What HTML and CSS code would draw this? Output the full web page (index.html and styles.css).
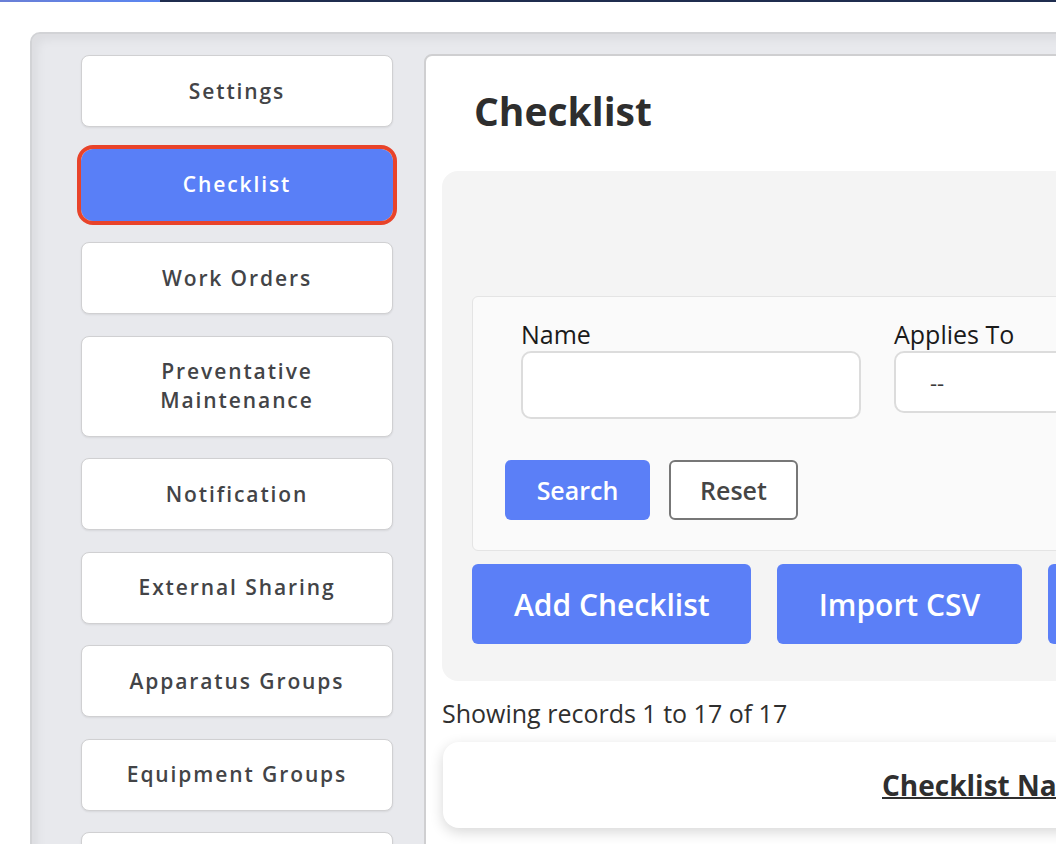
FILE: index.html
```html
<!DOCTYPE html>
<html lang="en">
<head>
  <meta charset="UTF-8">
  <title>Checklist</title>
  <meta name="viewport" content="width=device-width, initial-scale=1.0">
  <link rel="stylesheet" href="styles.css">
</head>
<body>
  <div class="progress">
    <div class="progress-done"></div>
  </div>

  <div class="shell">
    <aside class="side-nav">
      <a href="#" class="nav-btn">Settings</a>
      <a href="#" class="nav-btn active">Checklist</a>
      <a href="#" class="nav-btn">Work Orders</a>
      <a href="#" class="nav-btn">Preventative Maintenance</a>
      <a href="#" class="nav-btn">Notification</a>
      <a href="#" class="nav-btn">External Sharing</a>
      <a href="#" class="nav-btn">Apparatus Groups</a>
      <a href="#" class="nav-btn">Equipment Groups</a>
      <a href="#" class="nav-btn">Users</a>
    </aside>

    <main class="main-card">
      <h1 class="page-title">Checklist</h1>

      <section class="tools">
        <form class="filters">
          <div class="filter-row">
            <label class="field">
              <span>Name</span>
              <input type="text" class="name-input">
            </label>
            <label class="field">
              <span>Applies To</span>
              <select class="applies-select">
                <option>--</option>
              </select>
            </label>
          </div>
          <div class="filter-actions">
            <button type="button" class="btn-search">Search</button>
            <button type="reset" class="btn-reset">Reset</button>
          </div>
        </form>

        <div class="big-actions">
          <button class="btn-big">Add Checklist</button>
          <button class="btn-big">Import CSV</button>
          <button class="btn-big">Export CSV</button>
        </div>
      </section>

      <p class="record-count">Showing records 1 to 17 of 17</p>

      <div class="table-head">
        <a href="#" class="col-title">Checklist Name</a>
      </div>
    </main>
  </div>
</body>
</html>
```

FILE: styles.css
```css
body {
  margin: 0;
  font-family: 'Open Sans', sans-serif;
  background: #ffffff;
  color: #333333;
  overflow: hidden;
  width: 1056px;
  height: 844px;
}
.progress {
  height: 2px;
  background: #1f2d4f;
  display: flex;
}
.progress-done {
  width: 160px;
  background: linear-gradient(90deg, #6a7fd6, #5a86f1);
}
.shell {
  margin: 30px 0 0 30px;
  width: 1400px;
  height: 1000px;
  box-sizing: border-box;
  background: #e8e9ed;
  border: 2px solid #d2d3d6;
  border-radius: 10px;
  box-shadow: inset 6px 6px 10px rgba(0,0,0,0.05);
  display: flex;
  align-items: flex-start;
  padding: 20px 0 0 49px;
}
.side-nav {
  width: 312px;
  flex-shrink: 0;
  display: flex;
  flex-direction: column;
  gap: 21.5px;
  padding-top: 1px;
}
.nav-btn {
  display: block;
  box-sizing: border-box;
  background: #ffffff;
  border: 1px solid #d0d0d2;
  border-radius: 8px;
  box-shadow: 0 1px 2px rgba(0,0,0,0.08);
  padding: 20.5px 16px;
  line-height: 29px;
  text-align: center;
  text-decoration: none;
  font-size: 21px;
  font-weight: 600;
  letter-spacing: 1.9px;
  color: #434447;
}
.nav-btn.active {
  background: #597ff7;
  color: #ffffff;
  border-color: #597ff7;
  outline: 4px solid #e8432a;
  border-radius: 12px;
}
.main-card {
  margin: 0 0 0 31px;
  width: 900px;
  height: 900px;
  background: #ffffff;
  border: 2px solid #cfcfd1;
  border-radius: 8px;
  padding: 0 16px;
}
.page-title {
  margin: 28px 0 0 32px;
  font-size: 39px;
  font-weight: 700;
  line-height: 54px;
  color: #2e2e2e;
}
.tools {
  margin-top: 33px;
  background: #f4f4f4;
  border-radius: 16px;
  padding: 125px 30px 37px;
}
.filters {
  background: #fafafa;
  border: 1px solid #e4e4e4;
  border-radius: 6px;
  padding: 20px 32px 30px;
}
.filter-row {
  display: flex;
  gap: 33px;
  padding-left: 16px;
}
.field {
  display: flex;
  flex-direction: column;
  font-size: 25px;
  line-height: 34px;
  color: #1a1a1a;
}
.name-input {
  width: 340px;
  height: 68px;
  box-sizing: border-box;
  margin-top: 0;
  border: 2px solid #dcdcdc;
  border-radius: 10px;
  background: #ffffff;
}
.applies-select {
  width: 300px;
  height: 62px;
  box-sizing: border-box;
  border: 2px solid #dcdcdc;
  border-radius: 10px;
  background: #ffffff;
  padding: 0 20px 0 34px;
  font-family: 'Open Sans', sans-serif;
  font-size: 22px;
  color: #3a3a3a;
  appearance: none;
}
.filter-actions {
  display: flex;
  gap: 19px;
  margin-top: 41px;
}
.btn-search,
.btn-reset {
  height: 60px;
  border-radius: 6px;
  font-family: 'Open Sans', sans-serif;
  font-size: 25px;
  font-weight: 600;
  cursor: pointer;
}
.btn-search {
  width: 145px;
  background: #5b7ff7;
  border: none;
  color: #ffffff;
}
.btn-reset {
  width: 129px;
  background: #ffffff;
  border: 2px solid #777777;
  color: #454545;
}
.big-actions {
  display: flex;
  gap: 26px;
  margin-top: 13px;
}
.btn-big {
  height: 80px;
  padding: 0 42px;
  background: #5b7ff7;
  color: #ffffff;
  border: none;
  border-radius: 6px;
  font-family: 'Open Sans', sans-serif;
  font-size: 30px;
  font-weight: 600;
  white-space: nowrap;
  flex-shrink: 0;
  cursor: pointer;
}
.btn-big:first-child {
  padding: 0 41px 0 42px;
}
.record-count {
  margin: 16px 0 0 0;
  font-size: 25px;
  line-height: 32px;
  color: #2f2f2f;
}
.table-head {
  margin-top: 13px;
  margin-left: 1px;
  height: 86px;
  background: #ffffff;
  border-radius: 16px;
  box-shadow: 0 4px 14px rgba(0,0,0,0.16);
  display: flex;
  align-items: center;
  padding-left: 439px;
}
.col-title {
  font-size: 28px;
  font-weight: 700;
  color: #2f2f2f;
  text-decoration: underline;
  text-decoration-thickness: 2px;
  white-space: nowrap;
}
```
